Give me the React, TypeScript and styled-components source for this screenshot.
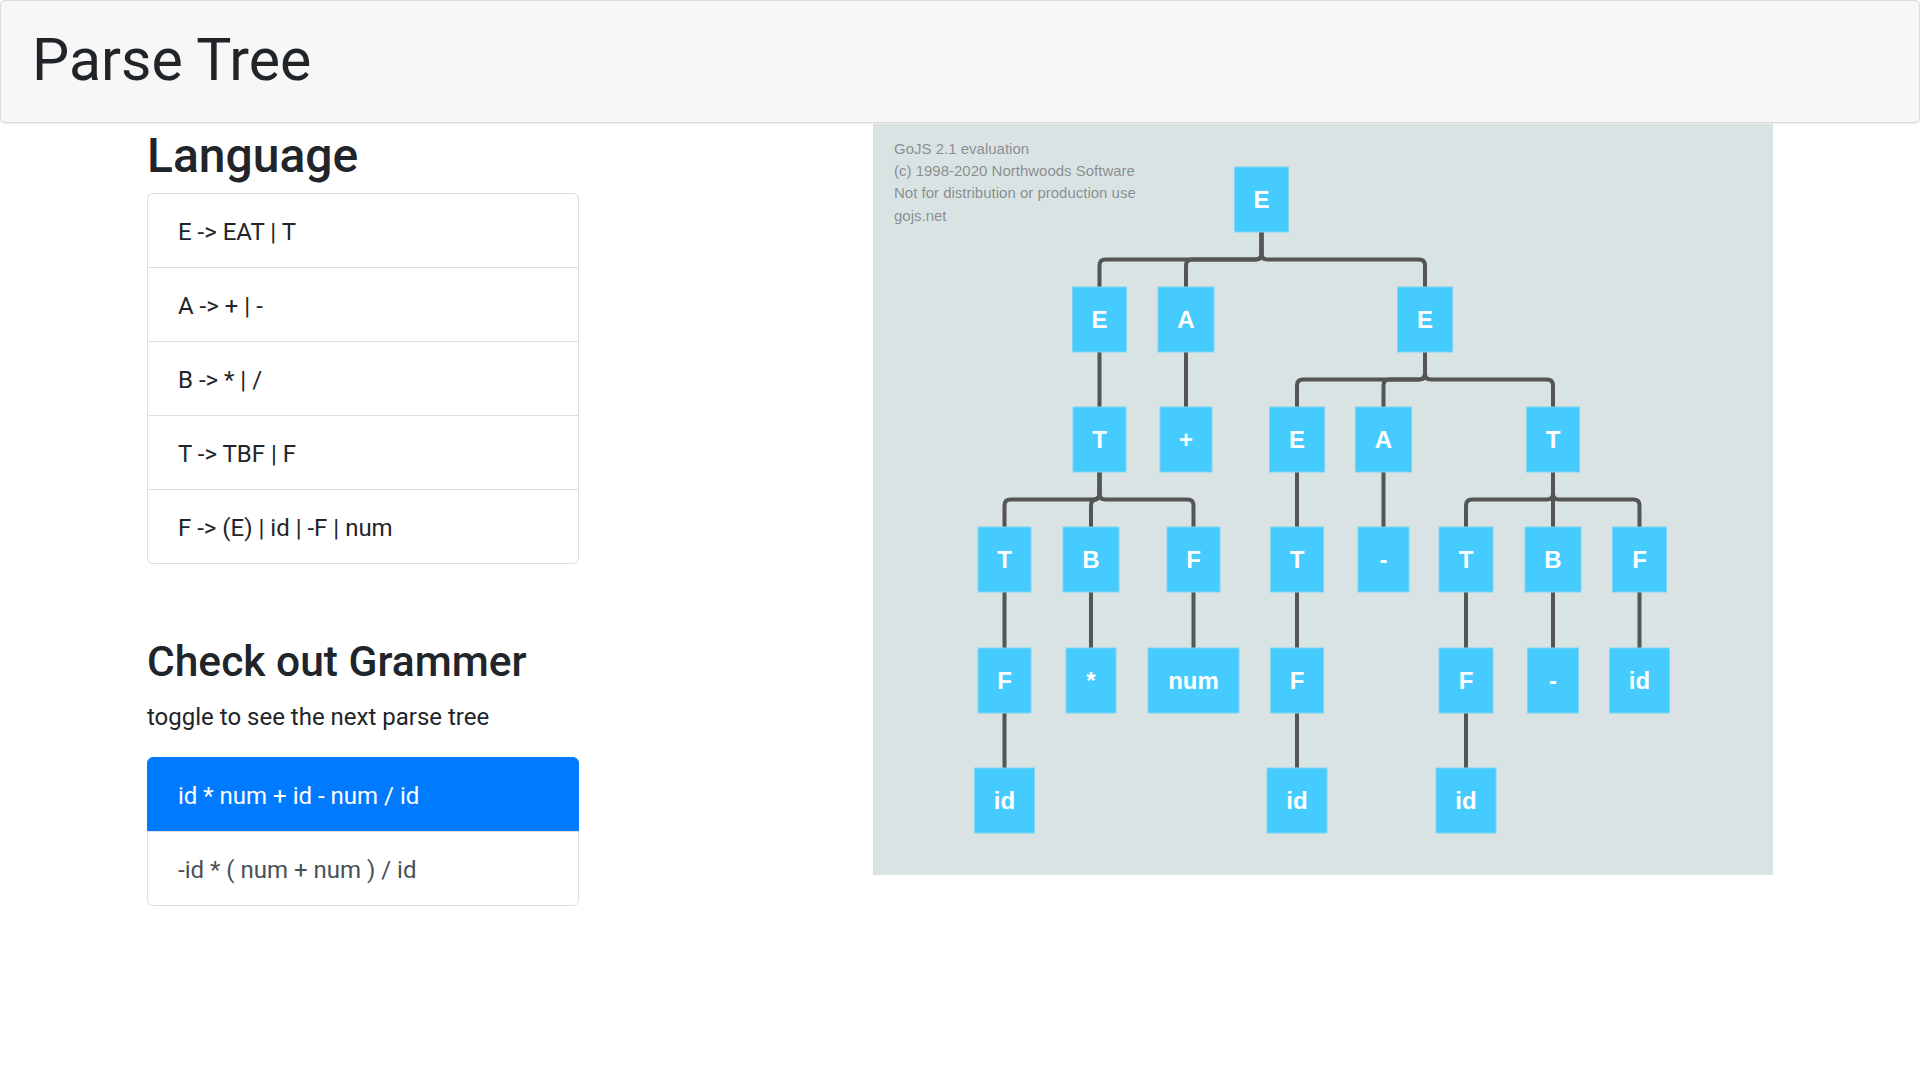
import React from "react";
import styled, { createGlobalStyle } from "styled-components";

const GlobalStyle = createGlobalStyle`
  html, body { margin: 0; padding: 0; background: #fff; }
  body {
    font-family: "Segoe UI", Roboto, "Noto Sans", Arial, sans-serif;
    color: #212529;
    width: 1920px;
  }
  * { box-sizing: border-box; }
`;

const Header = styled.header`
  height: 123px;
  background: #f7f7f7;
  border: 1px solid #dcdcdc;
  border-radius: 5px;
  box-shadow: 0 1px 1px rgba(0, 0, 0, 0.08);
  display: flex;
  align-items: center;
  padding: 0 31px 4px;
`;

const Title = styled.h1`
  margin: 0;
  font-size: 59px;
  font-weight: 400;
  line-height: 72px;
  color: #212529;
`;

const Main = styled.main`
  display: flex;
  align-items: flex-start;
  padding-left: 147px;
`;

const LeftCol = styled.section`
  width: 432px;
  display: flex;
  flex-direction: column;
`;

const Heading = styled.h2`
  margin: 4px 0 8px;
  font-size: 48px;
  font-weight: 500;
  line-height: 58px;
  color: #212529;
  white-space: nowrap;
`;

const SubHeading = styled.h3`
  margin: 73px 0 12px;
  font-size: 42.5px;
  font-weight: 500;
  line-height: 50px;
  color: #212529;
  white-space: nowrap;
`;

const Lead = styled.p`
  margin: 0 0 22px;
  font-size: 24px;
  line-height: 36px;
  color: #212529;
`;

const ListGroup = styled.ul`
  list-style: none;
  margin: 0;
  padding: 0;
  display: flex;
  flex-direction: column;
`;

const ListItem = styled.li<{ $active?: boolean; $action?: boolean }>`
  padding: 20px 30px 16px;
  font-size: 24px;
  line-height: 37px;
  margin-bottom: -1px;
  border: 1px solid ${(p) => (p.$active ? "#007bff" : "rgba(0, 0, 0, 0.125)")};
  background: ${(p) => (p.$active ? "#007bff" : "#fff")};
  color: ${(p) => (p.$active ? "#fff" : p.$action ? "#495057" : "#212529")};
  cursor: ${(p) => (p.$action ? "pointer" : "default")};
  &:first-child {
    border-top-left-radius: 6px;
    border-top-right-radius: 6px;
  }
  &:last-child {
    margin-bottom: 0;
    border-bottom-left-radius: 6px;
    border-bottom-right-radius: 6px;
  }
`;

const Canvas = styled.div`
  margin-left: 294px;
  width: 900px;
  height: 751px;
  margin-top: 1px;
  background: #dae3e4;
  flex-shrink: 0;
`;

const DiagramSvg = styled.svg`
  display: block;
`;

type TNode = { label: string; x: number; level: number; w: number; parent?: number };

const ROW_TOPS = [43, 163, 283, 403, 524, 644];
const NODE_H = 65;

const nodes: TNode[] = [
  { label: "E", x: 388.5, level: 0, w: 54 }, // 0
  { label: "E", x: 226.5, level: 1, w: 54, parent: 0 }, // 1
  { label: "A", x: 313, level: 1, w: 56, parent: 0 }, // 2
  { label: "E", x: 552, level: 1, w: 55, parent: 0 }, // 3
  { label: "T", x: 226.5, level: 2, w: 53, parent: 1 }, // 4
  { label: "+", x: 313, level: 2, w: 52, parent: 2 }, // 5
  { label: "E", x: 424, level: 2, w: 55, parent: 3 }, // 6
  { label: "A", x: 510.5, level: 2, w: 56, parent: 3 }, // 7
  { label: "T", x: 680, level: 2, w: 53, parent: 3 }, // 8
  { label: "T", x: 131.5, level: 3, w: 53, parent: 4 }, // 9
  { label: "B", x: 218, level: 3, w: 56, parent: 4 }, // 10
  { label: "F", x: 320.5, level: 3, w: 53, parent: 4 }, // 11
  { label: "T", x: 424, level: 3, w: 53, parent: 6 }, // 12
  { label: "-", x: 510.5, level: 3, w: 51, parent: 7 }, // 13
  { label: "T", x: 593, level: 3, w: 54, parent: 8 }, // 14
  { label: "B", x: 680, level: 3, w: 56, parent: 8 }, // 15
  { label: "F", x: 766.5, level: 3, w: 54, parent: 8 }, // 16
  { label: "F", x: 131.5, level: 4, w: 53, parent: 9 }, // 17
  { label: "*", x: 218, level: 4, w: 50, parent: 10 }, // 18
  { label: "num", x: 320.5, level: 4, w: 91, parent: 11 }, // 19
  { label: "F", x: 424, level: 4, w: 53, parent: 12 }, // 20
  { label: "F", x: 593, level: 4, w: 54, parent: 14 }, // 21
  { label: "-", x: 680, level: 4, w: 51, parent: 15 }, // 22
  { label: "id", x: 766.5, level: 4, w: 60, parent: 16 }, // 23
  { label: "id", x: 131.5, level: 5, w: 60, parent: 17 }, // 24
  { label: "id", x: 424, level: 5, w: 60, parent: 20 }, // 25
  { label: "id", x: 593, level: 5, w: 60, parent: 21 }, // 26
];

function linkPath(p: TNode, c: TNode): string {
  const y0 = ROW_TOPS[p.level] + NODE_H;
  const y1 = ROW_TOPS[c.level];
  const mid = (y0 + y1) / 2;
  if (Math.abs(p.x - c.x) < 1) {
    return `M${p.x},${y0} V${y1}`;
  }
  const r = 6;
  const dir = c.x > p.x ? 1 : -1;
  return [
    `M${p.x},${y0}`,
    `V${mid - r}`,
    `Q${p.x},${mid} ${p.x + dir * r},${mid}`,
    `H${c.x - dir * r}`,
    `Q${c.x},${mid} ${c.x},${mid + r}`,
    `V${y1}`,
  ].join(" ");
}

const watermark = [
  "GoJS 2.1 evaluation",
  "(c) 1998-2020 Northwoods Software",
  "Not for distribution or production use",
  "gojs.net",
];

function Diagram() {
  return (
    <DiagramSvg width={900} height={751} viewBox="0 0 900 751">
      {watermark.map((t, i) => (
        <text
          key={t}
          x={21}
          y={29.5 + i * 22.4}
          fontFamily="'Liberation Sans', Arial, sans-serif"
          fontSize={15}
          fill="rgba(0,0,0,0.4)"
        >
          {t}
        </text>
      ))}
      {nodes.map((n, i) =>
        n.parent !== undefined ? (
          <path
            key={`l${i}`}
            d={linkPath(nodes[n.parent], n)}
            stroke="#555"
            strokeWidth={4}
            fill="none"
          />
        ) : null
      )}
      {nodes.map((n, i) => {
        const top = ROW_TOPS[n.level];
        return (
          <g key={`n${i}`}>
            <rect
              x={n.x - n.w / 2}
              y={top}
              width={n.w}
              height={NODE_H}
              fill="#45cbfd"
              stroke="#7dd6f5"
              strokeWidth={1}
            />
            <text
              x={n.x}
              y={top + NODE_H / 2 + 8.5}
              textAnchor="middle"
              fontFamily="'Liberation Sans', Arial, sans-serif"
              fontWeight="bold"
              fontSize={24}
              fill="#fff"
            >
              {n.label}
            </text>
          </g>
        );
      })}
    </DiagramSvg>
  );
}

const grammar = ["E -> EAT | T", "A -> + | -", "B -> * | /", "T -> TBF | F", "F -> (E) | id | -F | num"];

export default function App() {
  return (
    <>
      <GlobalStyle />
      <Header>
        <Title>Parse Tree</Title>
      </Header>
      <Main>
        <LeftCol>
          <Heading>Language</Heading>
          <ListGroup>
            {grammar.map((g) => (
              <ListItem key={g}>{g}</ListItem>
            ))}
          </ListGroup>
          <SubHeading>Check out Grammer</SubHeading>
          <Lead>toggle to see the next parse tree</Lead>
          <ListGroup>
            <ListItem $active $action>id * num + id - num / id</ListItem>
            <ListItem $action>-id * ( num + num ) / id</ListItem>
          </ListGroup>
        </LeftCol>
        <Canvas>
          <Diagram />
        </Canvas>
      </Main>
    </>
  );
}
